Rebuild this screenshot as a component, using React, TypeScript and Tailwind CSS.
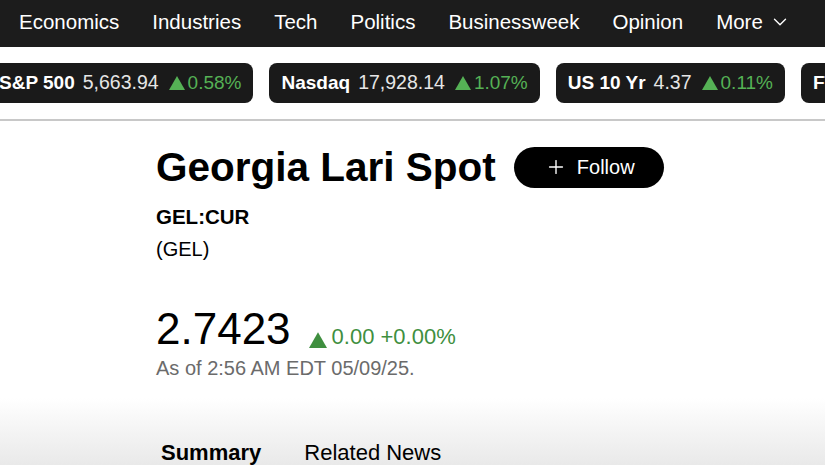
import { Plus, ChevronDown } from "lucide-react";

const navItems = ["Economics", "Industries", "Tech", "Politics", "Businessweek", "Opinion"];

const tickers = [
  { label: "S&P 500", value: "5,663.94", change: "0.58%" },
  { label: "Nasdaq", value: "17,928.14", change: "1.07%" },
  { label: "US 10 Yr", value: "4.37", change: "0.11%" },
  { label: "FTSE 100", value: "8,554.80", change: "0.31%" },
];

function UpTriangle({ className }: { className?: string }) {
  return (
    <svg viewBox="0 0 16 14" className={className} fill="currentColor">
      <path d="M8 0 L16 14 L0 14 Z" />
    </svg>
  );
}

export default function App() {
  return (
    <div className="w-[825px] h-[465px] overflow-hidden bg-white font-['Liberation_Sans',Arial,sans-serif] text-black">
      <nav className="h-[47px] bg-[#1c1c1c] flex items-center pl-[19px] pb-[3px] gap-[33px] text-[20.5px] text-white">
        {navItems.map((item) => (
          <span key={item}>{item}</span>
        ))}
        <span className="flex items-center gap-[6px]">
          More
          <ChevronDown className="w-[22px] h-[22px]" strokeWidth={1.5} />
        </span>
      </nav>

      <div className="pt-4 overflow-hidden">
        <div className="flex gap-4 -ml-[13px] whitespace-nowrap">
          {tickers.map((t) => (
            <div
              key={t.label}
              className="shrink-0 h-10 rounded-lg bg-[#1a1a1a] px-3 flex items-center text-[19px]"
            >
              <span className="font-bold text-white">{t.label}</span>
              <span className="ml-2 text-[19.5px] text-[#e6e6e6]">{t.value}</span>
              <UpTriangle className="ml-[10px] w-4 h-[14px] text-[#55b155]" />
              <span className="ml-[3px] text-[#55b155]">{t.change}</span>
            </div>
          ))}
        </div>
        <div className="mt-4 h-[2px] bg-[#c8c8c8]" />
      </div>

      <main className="pl-[156px] pt-[22px]">
        <div className="flex items-center gap-[18px]">
          <h1 className="text-[40.5px] leading-[48px] font-bold">Georgia Lari Spot</h1>
          <button className="h-[41px] w-[150px] rounded-full bg-black text-white flex items-center pl-[31px] gap-[10px] text-[20px]">
            <Plus className="w-[22px] h-[22px]" strokeWidth={1.5} />
            Follow
          </button>
        </div>
        <div className="mt-[10px] text-[20.5px] leading-8 font-bold">GEL:CUR</div>
        <div className="text-[20px] leading-8">(GEL)</div>

        <div className="mt-10 flex items-baseline">
          <span className="text-[44px] leading-[48px]">2.7423</span>
          <span className="ml-[18px] flex items-baseline text-[22px] text-[#3f8f3f]">
            <UpTriangle className="w-[18px] h-[16px] self-center mt-[6px]" />
            <span className="ml-[5px]">0.00 +0.00%</span>
          </span>
        </div>
        <div className="mt-[3px] text-[20px] leading-6 text-[#6b6b6b]">As of 2:56 AM EDT 05/09/25.</div>
      </main>

      <div className="mt-[18px] h-[70px] bg-gradient-to-b from-white to-[#e8e8e8] pl-[161px] pt-[43px] flex gap-[43px] text-[22px] leading-6">
        <span className="font-bold">Summary</span>
        <span>Related News</span>
      </div>
    </div>
  );
}
